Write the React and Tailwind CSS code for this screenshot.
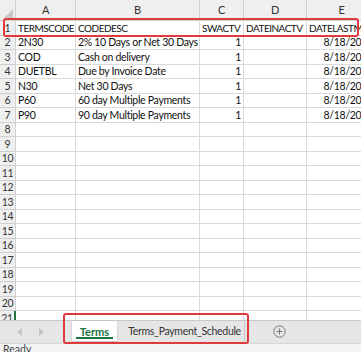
import React from "react";

const cols = [
  { w: "w-[60px]", label: "A" },
  { w: "w-[124px]", label: "B" },
  { w: "w-[44px]", label: "C" },
  { w: "w-[63px]", label: "D" },
  { w: "w-[70px]", label: "E" },
];

const data = [
  ["TERMSCODE", "CODEDESC", "SWACTV", "DATEINACTV", "DATELASTMOD"],
  ["2N30", "2% 10 Days or Net 30 Days", "1", "", "8/18/2020"],
  ["COD", "Cash on delivery", "1", "", "8/18/2020"],
  ["DUETBL", "Due by Invoice Date", "1", "", "8/18/2020"],
  ["N30", "Net 30 Days", "1", "", "8/18/2020"],
  ["P60", "60 day Multiple Payments", "1", "", "8/18/2020"],
  ["P90", "90 day Multiple Payments", "1", "", "8/18/2020"],
];

function Row({ n }) {
  const r = data[n - 1];
  return (
    <div className="flex h-[14.5px] shrink-0">
      <div
        className={`w-[16px] shrink-0 bg-[#efefef] border-b border-r border-[#cfcfcf] flex items-center justify-center text-[#333] text-[10.5px] ${
          n === 21 ? "border-r-2 border-r-[#217346]" : ""
        }`}
      >
        {n}
      </div>
      {cols.map((c, i) => {
        const v = r ? r[i] : "";
        const right = n > 1 && (i === 2 || i === 4);
        return (
          <div
            key={i}
            className={`${c.w} shrink-0 border-b border-r border-[#dadada] flex items-center px-[2px] whitespace-nowrap overflow-hidden text-[#111] ${
              right ? "justify-end" : ""
            } ${n === 1 ? "text-[10px] tracking-[-0.5px]" : ""}`}
          >
            {i === 4 && right ? (
              <span className="ml-auto pr-[1px]">{v}</span>
            ) : (
              <span>{v}</span>
            )}
          </div>
        );
      })}
    </div>
  );
}

export default function App() {
  const rows = Array.from({ length: 21 }, (_, i) => i + 1);
  return (
    <div
      className="relative w-[361px] h-[352px] overflow-hidden bg-white text-[10.5px] tracking-[-0.3px] leading-none"
      style={{ fontFamily: "Lato, 'Open Sans', sans-serif" }}
    >
      <div className="h-[320px] overflow-hidden flex flex-col">
        <div className="flex h-[21px] shrink-0 bg-[#efefef]">
          <div className="w-[16px] shrink-0 border-b border-r border-[#cfcfcf] relative">
            <svg className="absolute right-[2px] bottom-[2px]" width="9" height="9" viewBox="0 0 9 9">
              <polygon points="9,0 9,9 0,9" fill="#c8c8c8" />
            </svg>
          </div>
          {cols.map((c) => (
            <div
              key={c.label}
              className={`${c.w} shrink-0 border-b border-r border-[#cfcfcf] flex items-center justify-center text-[#333] text-[11px] pb-[1px]`}
            >
              {c.label}
            </div>
          ))}
        </div>
        {rows.map((n) => (
          <Row key={n} n={n} />
        ))}
      </div>
      <div className="h-[23px] bg-[#e6e6e6] border-t border-[#c8c8c8] flex items-stretch">
        <div className="w-[72px] flex items-center">
          <svg className="ml-[17px]" width="6" height="8" viewBox="0 0 6 8">
            <polygon points="5,0 5,8 0,4" fill="#c4c4c4" />
          </svg>
          <svg className="ml-[15px]" width="6" height="8" viewBox="0 0 6 8">
            <polygon points="1,0 1,8 6,4" fill="#c4c4c4" />
          </svg>
        </div>
        <div className="w-[45px] bg-white flex items-center justify-center relative font-bold text-[#217346] text-[11px] tracking-normal h-[20px] shadow-[0_1px_2px_rgba(0,0,0,0.2)]">
          Terms
          <div className="absolute left-[4px] right-[4px] bottom-[2px] h-[2px] bg-[#217346]" />
        </div>
        <div className="w-[128px] flex items-center justify-center pl-[8px] text-[#333] text-[10.5px] h-[20px] border-r border-[#c8c8c8]">
          Terms_Payment_Schedule
        </div>
        <div className="flex-1 flex items-center pl-[28px] h-[20px]">
          <svg width="13" height="13" viewBox="0 0 13 13">
            <circle cx="6.5" cy="6.5" r="5.7" fill="none" stroke="#7a7a7a" strokeWidth="1" />
            <line x1="6.5" y1="3.5" x2="6.5" y2="9.5" stroke="#7a7a7a" strokeWidth="1" />
            <line x1="3.5" y1="6.5" x2="9.5" y2="6.5" stroke="#7a7a7a" strokeWidth="1" />
          </svg>
        </div>
      </div>
      <div className="h-[9px] bg-[#f3f3f3] border-t border-[#d6d6d6] overflow-visible">
        <div className="pl-[3px] pt-0 text-[#444] text-[10.5px] tracking-normal">Ready</div>
      </div>

      <div className="absolute left-[3px] top-[18px] w-[356px] h-[19px] border-[2.5px] border-[#e0393e] rounded-[3px]" />
      <div className="absolute left-[63px] top-[313px] w-[186px] h-[31px] border-[2.5px] border-[#e0393e] rounded-[3px]" />
    </div>
  );
}
